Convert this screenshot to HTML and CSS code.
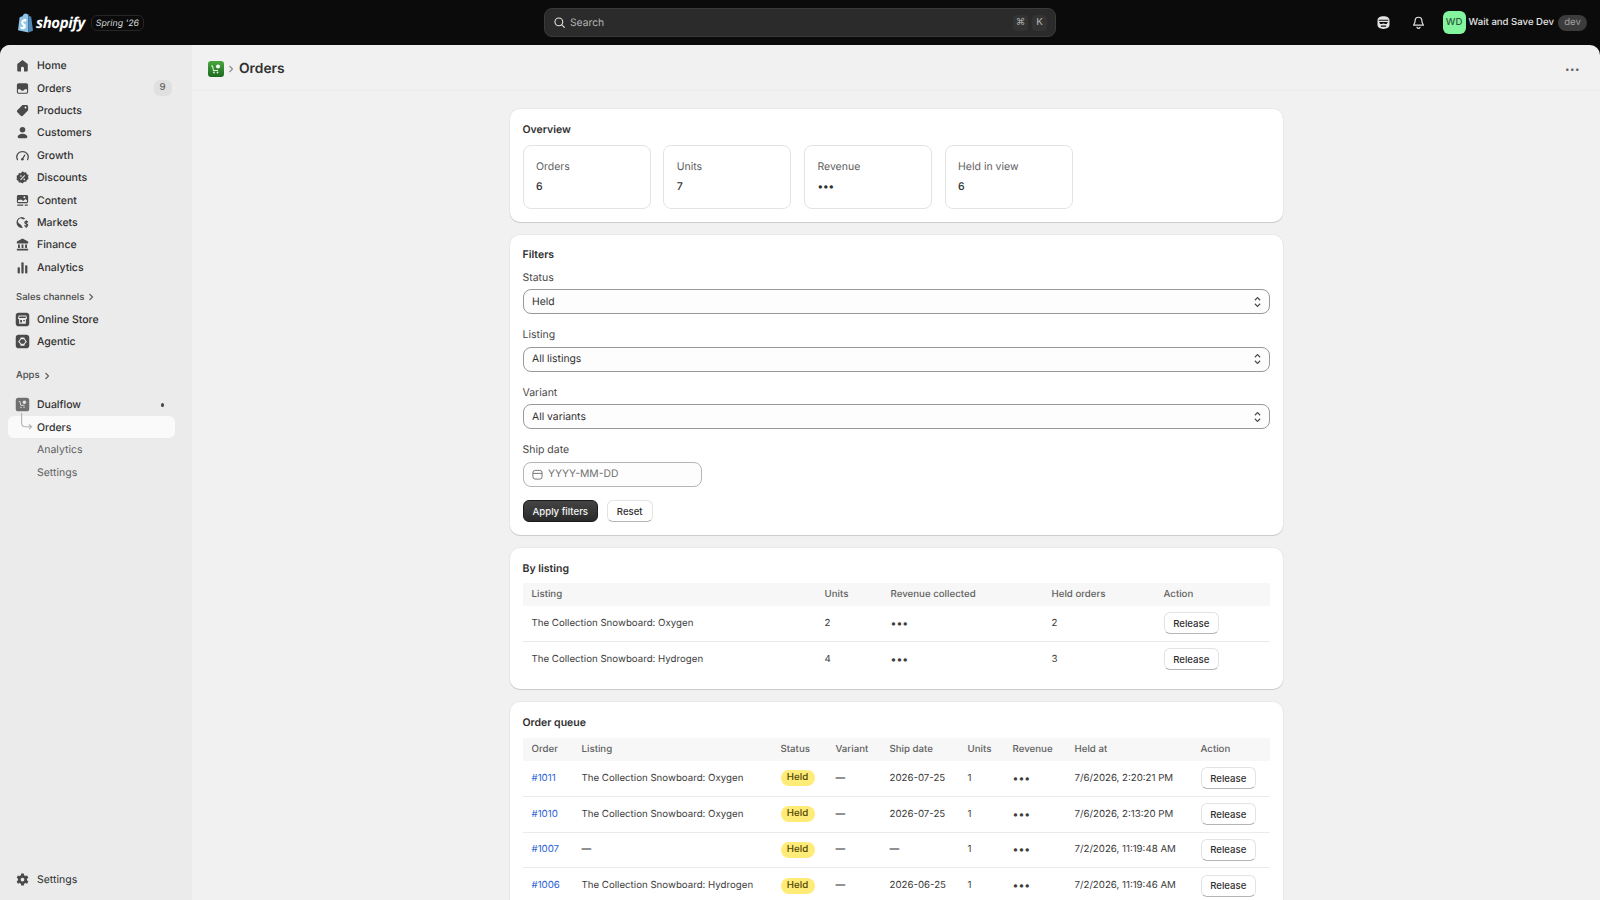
FILE: index.html
```html
<!DOCTYPE html>
<html lang="en">
<head>
  <meta charset="UTF-8" />
  <title>Orders</title>
  <link rel="stylesheet" href="styles.css">
</head>
<body>

  <header class="topbar">
    <div class="brand">
      <svg class="brand-bag" viewBox="0 0 16 20"><path fill="#8fc3e8" d="M1 17.200 2.600 4.600c.1-.5 2.300-1 3-1.300C6 1.600 7.300.4 8.600.4c.7 0 1.100.4 1.500.9l1.200-.1V19.500z"/><path fill="#4f86b5" d="M11.300 1.800 12.600 3.300l1.300.1c.2 0 .3.1.3.3L16 17.800 11.300 19.500z"/><path fill="#fff" d="M9.300 6.800 8.800 8.700s-.7-.3-1.400-.3c-1.200 0-1.200.7-1.200.9 0 1 2.700 1.400 2.700 3.800 0 1.900-1.200 3.100-2.800 3.100-2 0-2.900-1.200-2.900-1.200l.5-1.800s1 .9 1.900.9c.6 0 .8-.4.8-.8 0-1.300-2.200-1.400-2.200-3.600 0-1.800 1.300-3.600 4-3.600.9 0 1.300.7 1.300.7z"/></svg>
      <span class="brand-name">shopify</span>
      <span class="brand-tag">Spring '26</span>
    </div>
    <div class="search">
      <svg class="icon-sm" viewBox="0 0 20 20"><circle cx="9" cy="9" r="6" fill="none" stroke="#e3e3e3" stroke-width="1.700"/><path d="m13.500 13.500 4 4" stroke="#e3e3e3" stroke-width="1.700" stroke-linecap="round"/></svg>
      <span class="search-text">Search</span>
      <span class="kbd kbd-sym">⌘</span>
      <span class="kbd">K</span>
    </div>
    <div class="top-right">
      <svg class="top-icon" viewBox="0 0 20 20"><path fill="#e3e3e3" fill-rule="evenodd" d="M10 1.500c4.700 0 8 2 8 5.500v6c0 3.500-3.300 5.500-8 5.500S2 16.500 2 13V7c0-3.500 3.300-5.500 8-5.500zM3.600 6.300v1.500h12.800V6.300zM4.500 9.300c0 1.800 1.200 2.700 2.700 2.700 1.200 0 1.800-.7 2.800-.7s1.600.7 2.800.7c1.500 0 2.700-.9 2.700-2.700zM6.500 14v1.700h7V14z"/></svg>
      <svg class="top-icon bell" viewBox="0 0 20 20"><path fill="none" stroke="#e3e3e3" stroke-width="1.600" stroke-linejoin="round" d="M10 3c-2.800 0-4.500 2-4.500 4.700 0 3-1.500 4.500-2 5.800h13c-.5-1.300-2-2.800-2-5.800C14.500 5 12.800 3 10 3z"/><path fill="none" stroke="#e3e3e3" stroke-width="1.600" stroke-linecap="round" d="M8 16.500c.5.800 1.200 1.200 2 1.200s1.500-.4 2-1.200"/></svg>
      <span class="avatar">WD</span>
      <span class="store-name">Wait and Save Dev</span>
      <span class="dev-pill">dev</span>
    </div>
  </header>

  <div class="shell">
    <aside class="sidebar">
      <nav class="nav-main">
        <a class="nav-item"><svg class="nav-icon" viewBox="0 0 20 20"><path d="M10 2.500 3 8v8.500c0 .8.700 1.500 1.500 1.500H8v-4.500c0-1 .9-1.800 2-1.800s2 .8 2 1.800V18h3.500c.8 0 1.500-.7 1.500-1.500V8z"/></svg>Home</a>
        <a class="nav-item"><svg class="nav-icon" viewBox="0 0 20 20"><path fill-rule="evenodd" d="M5 3h10c1.400 0 2.500 1.100 2.500 2.500v9c0 1.400-1.100 2.500-2.500 2.500H5c-1.400 0-2.500-1.100-2.500-2.500v-9C2.500 4.100 3.600 3 5 3zm-1 8v3.500c0 .6.400 1 1 1h10c.6 0 1-.4 1-1V11h-3.200c-.4 1.300-1.500 2-2.800 2s-2.400-.7-2.800-2z"/></svg>Orders<span class="nav-badge">9</span></a>
        <a class="nav-item"><svg class="nav-icon" viewBox="0 0 20 20"><path fill-rule="evenodd" d="M11 2.500h4.500c1.100 0 2 .9 2 2V9c0 .5-.2 1-.6 1.400l-6.500 6.500c-.8.800-2 .8-2.800 0l-4.500-4.500c-.8-.8-.8-2 0-2.800l6.500-6.500c.4-.4.900-.6 1.400-.6zM14 7.300a1.300 1.300 0 1 0 0-2.600 1.300 1.300 0 0 0 0 2.600z"/></svg>Products</a>
        <a class="nav-item"><svg class="nav-icon" viewBox="0 0 20 20"><circle cx="10" cy="6.200" r="3.700"/><path d="M10 11.500c3.600 0 6.500 1.800 6.500 4.200 0 1.100-.8 1.800-1.800 1.800H5.300c-1 0-1.800-.7-1.800-1.800 0-2.400 2.900-4.200 6.500-4.200z"/></svg>Customers</a>
        <a class="nav-item"><svg class="nav-icon" viewBox="0 0 20 20"><path fill="none" stroke="#4a4a4a" stroke-width="1.600" stroke-linecap="round" d="M3.300 15.500A7 7 0 0 1 10 5a7 7 0 0 1 6.700 10.500"/><path fill="none" stroke="#4a4a4a" stroke-width="1.600" stroke-linecap="round" d="m10 14.500 3-5"/><circle cx="9.800" cy="15" r="1.700"/></svg>Growth</a>
        <a class="nav-item"><svg class="nav-icon" viewBox="0 0 20 20"><path fill-rule="evenodd" d="M10 1.800l2.200 1.500 2.600-.2.900 2.400 2.300 1.300-.6 2.600.6 2.600-2.300 1.300-.9 2.400-2.600-.2L10 18l-2.200-1.500-2.600.2-.9-2.400L2 13l.6-2.600L2 7.800l2.300-1.300.9-2.400 2.600.2zM12.600 6.700l-5.800 5.800 1 1 5.800-5.800zM7.900 9.200a1.100 1.100 0 1 0 0-2.200 1.100 1.100 0 0 0 0 2.200zm4.400 4.400a1.100 1.100 0 1 0 0-2.200 1.100 1.100 0 0 0 0 2.200z"/></svg>Discounts</a>
        <a class="nav-item"><svg class="nav-icon" viewBox="0 0 20 20"><path fill-rule="evenodd" d="M4.500 2.500h11c1.100 0 2 .9 2 2v7c0 1.100-.9 2-2 2h-11c-1.100 0-2-.9-2-2v-7c0-1.100.9-2 2-2zM4 9.500V11.500c0 .3.200.5.500.5h11c.3 0 .5-.2.500-.5V10l-2-2-3.200 2.700L8 8.500zM12.500 7a1.300 1.300 0 1 0 0-2.600 1.300 1.300 0 0 0 0 2.600z"/><path d="M3 15.200h8v1.700H3zM13 15.200h4v1.700h-4z"/></svg>Content</a>
        <a class="nav-item"><svg class="nav-icon" viewBox="0 0 20 20"><path d="M9.500 2.500A7.500 7.500 0 0 0 2 10a7.500 7.500 0 0 0 8.500 7.400 5 5 0 0 1-1-1.600L8 13l-3-2-1.300-2.500C4.300 6 5.800 4.600 8 4.300l3 1.700 2.800-.9a7.500 7.500 0 0 0-4.300-2.600z"/><path fill="none" stroke="#4a4a4a" stroke-width="1.500" stroke-linecap="round" d="M17 9.500c-.5-.8-1.300-1-2-1-1 0-2 .6-2 1.600 0 2.200 4 1.300 4 3.500 0 1-1 1.600-2 1.600-.8 0-1.500-.3-2-1M15 7.500v9"/></svg>Markets</a>
        <a class="nav-item"><svg class="nav-icon" viewBox="0 0 20 20"><path d="M10 2 2.500 6v2.500h15V6z"/><path d="M4 10h2.500v4.500H4zM8.750 10h2.500v4.500h-2.500zM13.500 10H16v4.500h-2.500zM2.500 15.700h15V18h-15z"/></svg>Finance</a>
        <a class="nav-item"><svg class="nav-icon" viewBox="0 0 20 20"><rect x="3.500" y="9.500" width="3" height="8.500" rx="1.200"/><rect x="8.500" y="3" width="3" height="15" rx="1.200"/><rect x="13.500" y="7" width="3" height="11" rx="1.200"/></svg>Analytics</a>
      </nav>

      <div class="nav-heading nav-heading-sales">Sales channels <svg class="chev" viewBox="0 0 8 10"><path d="m2.500 2 3 3-3 3" fill="none" stroke="#616161" stroke-width="1.200"/></svg></div>
      <a class="nav-item"><svg class="nav-icon" viewBox="0 0 20 20"><path fill-rule="evenodd" d="M4.500 1h11c1.900 0 3.500 1.600 3.500 3.500v11c0 1.900-1.600 3.500-3.500 3.500h-11C2.600 19 1 17.400 1 15.500v-11C1 2.600 2.600 1 4.500 1zM5 4.500 4 8.200c0 1 .9 1.500 1.500 1.500V15.500h9V9.700c.6 0 1.500-.5 1.500-1.500L15 4.500zM6 6h8l.6 2H5.400zM7 10.500h2.300v3.500H7zM11 10.500h2v1.800h-2z"/></svg>Online Store</a>
      <a class="nav-item"><svg class="nav-icon" viewBox="0 0 20 20"><path fill-rule="evenodd" d="M4.500 1h11c1.900 0 3.500 1.600 3.500 3.500v11c0 1.900-1.600 3.500-3.500 3.500h-11C2.600 19 1 17.400 1 15.500v-11C1 2.600 2.600 1 4.500 1zM7.500 4.500 6.800 7 4.500 9.500v1l2.300 2.500.7 2.500h5l.7-2.500 2.300-2.500v-1L13.200 7l-.7-2.500zM8.300 7h3.400l2.300 3-2.300 3H8.300L6 10z"/></svg>Agentic</a>

      <div class="nav-heading nav-heading-apps">Apps <svg class="chev" viewBox="0 0 8 10"><path d="m2.500 2 3 3-3 3" fill="none" stroke="#616161" stroke-width="1.200"/></svg></div>
      <a class="nav-item nav-app">
        <svg class="nav-icon" viewBox="0 0 20 20"><rect x="1" y="1" width="18" height="18" rx="3.500" fill="#6f6f6f"/><path d="M5 6h1.700l1 5h5" fill="none" stroke="#d8d8d8" stroke-width="1.300"/><circle cx="12.500" cy="7" r="2.300" fill="#e4e4e4"/><circle cx="8" cy="13.500" r="1" fill="#d8d8d8"/><circle cx="12" cy="13.500" r="1" fill="#d8d8d8"/></svg>
        Dualflow<span class="nav-dot"></span>
      </a>
      <a class="nav-item nav-sub nav-active">
        <svg class="nav-tree" viewBox="0 0 24 24"><path d="M5 0v11c0 3 1.500 4 4 4h7m-3-2.500 3 2.500-3 2.500" fill="none" stroke="#b5b5b5" stroke-width="1.200"/></svg>
        Orders
      </a>
      <a class="nav-item nav-sub">Analytics</a>
      <a class="nav-item nav-sub">Settings</a>

      <a class="nav-item nav-settings"><svg class="nav-icon" viewBox="0 0 20 20"><path fill-rule="evenodd" d="M8.300 2h3.400l.5 2.300 1.600.9 2.300-.7 1.700 3-1.800 1.500v2l1.800 1.500-1.700 3-2.300-.7-1.600.9-.5 2.300H8.300l-.5-2.300-1.600-.9-2.300.7-1.700-3 1.800-1.500V9L2.200 7.500l1.700-3 2.300.7 1.600-.9zM10 12.500a2.500 2.500 0 1 0 0-5 2.500 2.500 0 0 0 0 5z"/></svg>Settings</a>
    </aside>

    <div class="main">
      <div class="page-head">
        <svg class="app-icon" viewBox="0 0 16 16"><defs><linearGradient id="appg" x1="0" y1="0" x2="0" y2="1"><stop offset="0" stop-color="#47a83c"/><stop offset="1" stop-color="#1d6a22"/></linearGradient></defs><rect width="16" height="16" rx="3" fill="url(#appg)"/><path d="M3 5h1.500l1 4.500h4.500" fill="none" stroke="#dff3dc" stroke-width="1.100"/><circle cx="10" cy="5.500" r="2" fill="#fff"/><circle cx="6" cy="11.500" r=".9" fill="#dff3dc"/><circle cx="9.500" cy="11.500" r=".9" fill="#dff3dc"/></svg>
        <svg class="head-chev" viewBox="0 0 8 10"><path d="m2.500 2 3 3-3 3" fill="none" stroke="#8a8a8a" stroke-width="1.100"/></svg>
        <h1 class="page-title">Orders</h1>
        <span class="head-more">•••</span>
      </div>

      <div class="content">
        <section class="card card-overview">
          <h2 class="card-title">Overview</h2>
          <div class="metrics">
            <div class="metric"><div class="metric-label">Orders</div><div class="metric-value">6</div></div>
            <div class="metric"><div class="metric-label">Units</div><div class="metric-value">7</div></div>
            <div class="metric"><div class="metric-label">Revenue</div><div class="metric-value">•••</div></div>
            <div class="metric"><div class="metric-label">Held in view</div><div class="metric-value">6</div></div>
          </div>
        </section>

        <section class="card card-filters">
          <h2 class="card-title">Filters</h2>
          <div class="fields">
            <div class="field">
              <label class="field-label">Status</label>
              <div class="select">Held<svg class="updown" viewBox="0 0 10 16"><path d="m2 6 3-3 3 3M2 10l3 3 3-3" fill="none" stroke="#4a4a4a" stroke-width="1.300"/></svg></div>
            </div>
            <div class="field">
              <label class="field-label">Listing</label>
              <div class="select">All listings<svg class="updown" viewBox="0 0 10 16"><path d="m2 6 3-3 3 3M2 10l3 3 3-3" fill="none" stroke="#4a4a4a" stroke-width="1.300"/></svg></div>
            </div>
            <div class="field">
              <label class="field-label">Variant</label>
              <div class="select">All variants<svg class="updown" viewBox="0 0 10 16"><path d="m2 6 3-3 3 3M2 10l3 3 3-3" fill="none" stroke="#4a4a4a" stroke-width="1.300"/></svg></div>
            </div>
            <div class="field">
              <label class="field-label">Ship date</label>
              <div class="select select-date">
                <svg class="cal" viewBox="0 0 12 12"><rect x="1" y="1.500" width="10" height="9.500" rx="2.500" fill="none" stroke="#6b6b6b" stroke-width="1"/><path d="M1 4.800h10" stroke="#6b6b6b" stroke-width="1"/></svg>
                <span class="placeholder">YYYY-MM-DD</span>
              </div>
            </div>
          </div>
          <div class="filter-actions">
            <button class="btn btn-dark">Apply filters</button>
            <button class="btn btn-reset">Reset</button>
          </div>
        </section>

        <section class="card card-listing">
          <h2 class="card-title">By listing</h2>
          <table class="grid grid-listing">
            <colgroup><col class="l1"><col class="l2"><col class="l3"><col class="l4"><col class="l5"></colgroup>
            <thead><tr><th>Listing</th><th>Units</th><th>Revenue collected</th><th>Held orders</th><th>Action</th></tr></thead>
            <tbody>
              <tr><td>The Collection Snowboard: Oxygen</td><td>2</td><td class="dots">•••</td><td>2</td><td><button class="btn">Release</button></td></tr>
              <tr><td>The Collection Snowboard: Hydrogen</td><td>4</td><td class="dots">•••</td><td>3</td><td><button class="btn">Release</button></td></tr>
            </tbody>
          </table>
        </section>

        <section class="card">
          <h2 class="card-title">Order queue</h2>
          <table class="grid grid-queue">
            <colgroup><col class="q1"><col class="q2"><col class="q3"><col class="q4"><col class="q5"><col class="q6"><col class="q7"><col class="q8"><col class="q9"></colgroup>
            <thead><tr><th>Order</th><th>Listing</th><th>Status</th><th>Variant</th><th>Ship date</th><th>Units</th><th>Revenue</th><th>Held at</th><th>Action</th></tr></thead>
            <tbody>
              <tr><td><a class="order-link">#1011</a></td><td>The Collection Snowboard: Oxygen</td><td><span class="badge">Held</span></td><td>—</td><td>2026-07-25</td><td>1</td><td class="dots">•••</td><td>7/6/2026, 2:20:21 PM</td><td><button class="btn">Release</button></td></tr>
              <tr><td><a class="order-link">#1010</a></td><td>The Collection Snowboard: Oxygen</td><td><span class="badge">Held</span></td><td>—</td><td>2026-07-25</td><td>1</td><td class="dots">•••</td><td>7/6/2026, 2:13:20 PM</td><td><button class="btn">Release</button></td></tr>
              <tr><td><a class="order-link">#1007</a></td><td>—</td><td><span class="badge">Held</span></td><td>—</td><td>—</td><td>1</td><td class="dots">•••</td><td>7/2/2026, 11:19:48 AM</td><td><button class="btn">Release</button></td></tr>
              <tr><td><a class="order-link">#1006</a></td><td>The Collection Snowboard: Hydrogen</td><td><span class="badge">Held</span></td><td>—</td><td>2026-06-25</td><td>1</td><td class="dots">•••</td><td>7/2/2026, 11:19:46 AM</td><td><button class="btn">Release</button></td></tr>
            </tbody>
          </table>
        </section>
      </div>
    </div>
  </div>

</body>
</html>
```

FILE: styles.css
```css
* {
  box-sizing: border-box;
}

html, body {
  height: 100%;
}

body {
  margin: 0;
  overflow: hidden;
  display: flex;
  flex-direction: column;
  background: #0b0b0b;
  color: #303030;
  font-family: Inter, "Liberation Sans", sans-serif;
  font-size: 10.5px;
  text-rendering: geometricPrecision;
}

/* top bar */
.topbar {
  height: 45px;
  flex: none;
  display: grid;
  grid-template-columns: 1fr 512px 1fr;
  align-items: center;
  background: #0b0b0b;
}

.brand {
  display: flex;
  align-items: center;
  padding-left: 17px;
}

.brand-bag {
  width: 16px;
  height: 20px;
}

.brand-name {
  margin-left: 3px;
  color: #fff;
  font-family: "Open Sans", sans-serif;
  font-size: 15px;
  font-weight: 700;
  font-style: italic;
  letter-spacing: -0.4px;
}

.brand-tag {
  margin-left: 6px;
  width: 53px;
  height: 16px;
  line-height: 15px;
  text-align: center;
  border: 1px solid #262626;
  border-radius: 6px;
  color: #d8d8d8;
  font-size: 8.8px;
  font-style: italic;
}

.search {
  height: 29px;
  display: flex;
  align-items: center;
  padding: 0 8px 0 8px;
  background: #2b2b2b;
  border: 1px solid #3a3a3a;
  border-radius: 8px;
  color: #b5b5b5;
  font-size: 10.3px;
}

.icon-sm {
  width: 13px;
  height: 13px;
}

.search-text {
  flex: 1;
  margin-left: 4px;
}

.kbd {
  width: 15px;
  height: 16px;
  margin-left: 4px;
  line-height: 16px;
  text-align: center;
  border-radius: 4px;
  background: #333;
  color: #a8a8a8;
  font-size: 9.6px;
  font-weight: 500;
}

.kbd-sym {
  font-family: "DejaVu Sans", sans-serif;
}

.top-right {
  display: flex;
  align-items: center;
  justify-content: flex-end;
  padding-right: 13px;
}

.top-icon {
  width: 15px;
  height: 15px;
  margin-right: 20px;
}

.top-icon.bell {
  margin-right: 16.500px;
}

.avatar {
  width: 23px;
  height: 23px;
  line-height: 23px;
  text-align: center;
  border-radius: 6px;
  background: #84f59f;
  color: #2d5a3c;
  font-size: 9.6px;
  font-weight: 500;
}

.store-name {
  margin-left: 3px;
  color: #e3e3e3;
  font-size: 9.6px;
  font-weight: 500;
}

.dev-pill {
  margin-left: 4px;
  width: 29px;
  height: 16px;
  line-height: 16px;
  text-align: center;
  border-radius: 8px;
  background: #3c3c3c;
  color: #a0a0a0;
  font-size: 9.6px;
}

/* layout below the bar */
.shell {
  flex: 1;
  min-height: 0;
  display: flex;
  border-radius: 10px 10px 0 0;
  overflow: hidden;
  background: #f1f1f1;
}

.sidebar {
  width: 192px;
  flex: none;
  display: flex;
  flex-direction: column;
  padding-top: 9.5px;
  background: #ebebeb;
}

.nav-main {
  display: flex;
  flex-direction: column;
}

.nav-item {
  height: 22.4px;
  flex: none;
  display: flex;
  align-items: center;
  margin: 0 17.5px 0 8px;
  padding-left: 7px;
  color: #303030;
  font-size: 10.5px;
  font-weight: 500;
  border-radius: 6px;
}

.nav-icon {
  width: 15px;
  height: 15px;
  flex: none;
  margin-right: 7px;
  fill: #4a4a4a;
}

.nav-badge {
  margin-left: auto;
  margin-right: 3px;
  width: 18px;
  height: 16px;
  line-height: 16px;
  text-align: center;
  border-radius: 6px;
  background: #e0e0e0;
  color: #616161;
  font-size: 9.6px;
}

.nav-heading {
  display: flex;
  align-items: center;
  height: 16px;
  padding-left: 16px;
  color: #4a4a4a;
  font-size: 9.5px;
  font-weight: 500;
}

.nav-heading-sales {
  margin: 11px 0 3px;
}

.nav-heading-apps {
  margin: 14.500px 0 10px;
}

.chev {
  width: 8px;
  height: 10px;
  margin-left: 3px;
}

.nav-dot {
  margin-left: auto;
  margin-right: 10.500px;
  width: 3.500px;
  height: 3.500px;
  border-radius: 50%;
  background: #4a4a4a;
}

.nav-sub {
  position: relative;
  padding-left: 29px;
  color: #616161;
  font-weight: 400;
}

.nav-active {
  background: #fafafa;
  color: #303030;
  font-weight: 500;
}

.nav-tree {
  position: absolute;
  left: 9px;
  top: -3px;
  width: 22px;
  height: 22px;
}

.nav-settings {
  margin-top: auto;
  margin-bottom: 9px;
  font-weight: 400;
}

/* main column */
.main {
  flex: 1;
  min-width: 0;
  display: flex;
  flex-direction: column;
}

.page-head {
  height: 46px;
  flex: none;
  display: flex;
  align-items: center;
  padding: 2px 20px 0 16px;
  border-bottom: 1px solid #ececec;
}

.app-icon {
  width: 16px;
  height: 16px;
}

.head-chev {
  width: 8px;
  height: 10px;
  margin: 0 4px 0 3px;
}

.page-title {
  margin: 0;
  font-size: 13.8px;
  font-weight: 600;
  color: #303030;
}

.head-more {
  margin-left: auto;
  color: #616161;
  font-size: 8px;
  letter-spacing: 0.5px;
}

.content {
  width: 773px;
  margin: 0 auto;
  padding-top: 18px;
  display: flex;
  flex-direction: column;
  gap: 13px;
}

.card {
  flex: none;
  padding: 13.500px 13px 13px;
  background: #fff;
  border-radius: 10px;
  box-shadow: 0 1px 0 rgba(26, 26, 26, 0.07), 0 0 0 1px rgba(26, 26, 26, 0.03), 0 1px 1px rgba(26, 26, 26, 0.08);
}

.card-title {
  margin: 0 0 8px;
  height: 14px;
  line-height: 14px;
  font-size: 10.5px;
  font-weight: 600;
  color: #303030;
}

.card-filters {
  padding-top: 12.500px;
}

.card-filters .card-title {
  margin-bottom: 9px;
}

.card-listing {
  padding-bottom: 12.500px;
}

.card-listing .card-title {
  margin-bottom: 7px;
}

.metrics {
  display: flex;
  gap: 12.700px;
}

.metric {
  width: 128px;
  height: 64.700px;
  padding: 14px 12.500px;
  border: 1px solid #e3e3e3;
  border-radius: 8px;
}

.metric-label {
  height: 14px;
  line-height: 14px;
  color: #616161;
}

.metric-value {
  margin-top: 6px;
  height: 14px;
  line-height: 14px;
  font-weight: 500;
}

.fields {
  display: flex;
  flex-direction: column;
  gap: 14px;
}

.field-label {
  display: block;
  height: 14px;
  line-height: 14px;
  margin-bottom: 4.500px;
  color: #4a4a4a;
}

.select {
  height: 25px;
  display: flex;
  align-items: center;
  justify-content: space-between;
  padding: 0 7px 0 8.500px;
  background: #fdfdfd;
  border: 1px solid #999;
  border-radius: 8px;
  color: #303030;
  font-size: 10.35px;
}

.updown {
  width: 9px;
  height: 14px;
}

.select-date {
  width: 179px;
  justify-content: flex-start;
  border-color: #b5b5b5;
}

.cal {
  width: 11px;
  height: 11px;
  margin-right: 5px;
}

.placeholder {
  color: #6f6f6f;
}

.filter-actions {
  display: flex;
  gap: 9px;
  margin-top: 13.500px;
}

.btn {
  height: 22px;
  padding: 0;
  width: 55.500px;
  background: #fff;
  border: 1px solid #e3e3e3;
  border-bottom-color: #b5b5b5;
  border-radius: 6px;
  color: #303030;
  font-family: inherit;
  font-size: 9.6px;
  font-weight: 500;
}

.btn-dark {
  width: 75.500px;
  background: linear-gradient(#444, #2a2a2a);
  border: 1px solid #1a1a1a;
  color: #f5f5f5;
}

.btn-reset {
  width: 45.500px;
}

/* tables */
.grid {
  width: 747px;
  border-collapse: collapse;
  table-layout: fixed;
  font-size: 9.7px;
}

.grid th {
  height: 23px;
  padding: 0 0 0 9px;
  text-align: left;
  background: #f7f7f7;
  color: #616161;
  font-weight: 500;
}

.grid td {
  height: 35.600px;
  padding: 0 0 0 9px;
  border-bottom: 1px solid #ebebeb;
  color: #3d3d3d;
  white-space: nowrap;
}

.grid tbody tr:last-child td {
  border-bottom: 0;
}

.dots {
  font-size: 10.5px;
}

.l1 { width: 293px; }
.l2 { width: 66px; }
.l3 { width: 161px; }
.l4 { width: 112px; }
.l5 { width: 115px; }

.q1 { width: 50px; }
.q2 { width: 199px; }
.q3 { width: 55px; }
.q4 { width: 54px; }
.q5 { width: 78px; }
.q6 { width: 45px; }
.q7 { width: 62px; }
.q8 { width: 126px; }
.q9 { width: 78px; }

.order-link {
  color: #2a62d6;
}

.badge {
  display: inline-block;
  width: 34px;
  height: 16px;
  line-height: 16px;
  text-align: center;
  border-radius: 8px;
  background: #ffeb78;
  color: #4f4700;
  font-weight: 500;
}
```
